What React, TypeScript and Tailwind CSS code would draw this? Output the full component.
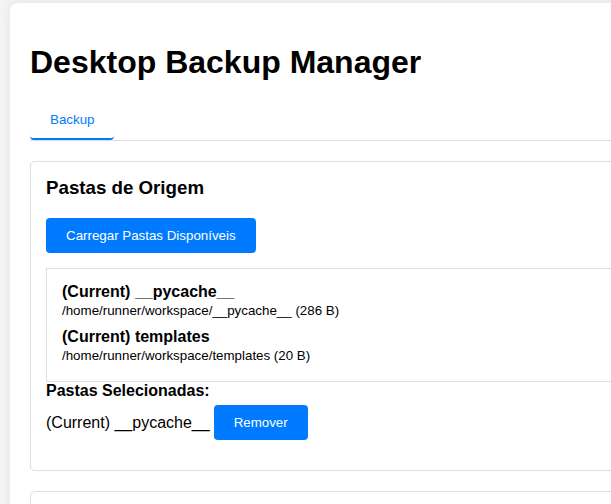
import React from 'react';

const FOLDERS = [
  { name: '(Current) __pycache__', path: '/home/runner/workspace/__pycache__', size: '286 B' },
  { name: '(Current) templates', path: '/home/runner/workspace/templates', size: '20 B' },
];

const App: React.FC = () => {
  return (
    <div
      className="h-screen overflow-hidden bg-[#f4f4f4] pt-[3px] pl-[10px] text-black"
      style={{ fontFamily: '"Liberation Sans", Arial, sans-serif' }}
    >
      <div className="w-[1180px] min-h-[700px] rounded-[8px] bg-white p-[20px] shadow-[0_0_10px_rgba(0,0,0,0.08)]">
        <h1 className="my-[21px] text-[32px] font-bold leading-[37px]">Desktop Backup Manager</h1>

        {/* Tabs */}
        <div className="flex border-b border-[#ddd]">
          <button className="rounded-[4px] border-b-2 border-[#007bff] px-[20px] py-[10px] text-[13.33px] leading-[16px] text-[#007bff]">
            Backup
          </button>
        </div>

        {/* Source folders */}
        <div className="mt-[20px] rounded-[5px] border border-[#ddd] px-[15px] pt-[15px] pb-[30px]">
          <h3 className="mb-[20px] text-[18.72px] font-bold leading-[21px]">Pastas de Origem</h3>
          <button className="rounded-[4px] bg-[#007bff] px-[20px] py-[10px] text-[13.33px] leading-[15px] text-white">
            Carregar Pastas Disponíveis
          </button>

          <div className="mt-[15px] border border-[#ddd] px-[10px] pt-[8px] pb-[14px]">
            {FOLDERS.map((f) => (
              <div key={f.path} className="px-[5px] pt-[5px] pb-[3px]">
                <div className="text-[16px] font-bold leading-[20px]">{f.name}</div>
                <div className="text-[13.33px] leading-[17px]">
                  {f.path} ({f.size})
                </div>
              </div>
            ))}
          </div>

          <div className="text-[16px] font-bold leading-[18px]">Pastas Selecionadas:</div>
          <div className="mt-[5px] flex items-center gap-[4px] text-[16px]">
            <span>(Current) __pycache__</span>
            <button className="rounded-[4px] bg-[#007bff] px-[20px] py-[10px] text-[13.33px] leading-[15px] text-white">
              Remover
            </button>
          </div>
        </div>

        {/* Destination (below the fold) */}
        <div className="mt-[20px] h-[200px] rounded-[5px] border border-[#ddd] p-[15px]" />
      </div>
    </div>
  );
};

export default App;
